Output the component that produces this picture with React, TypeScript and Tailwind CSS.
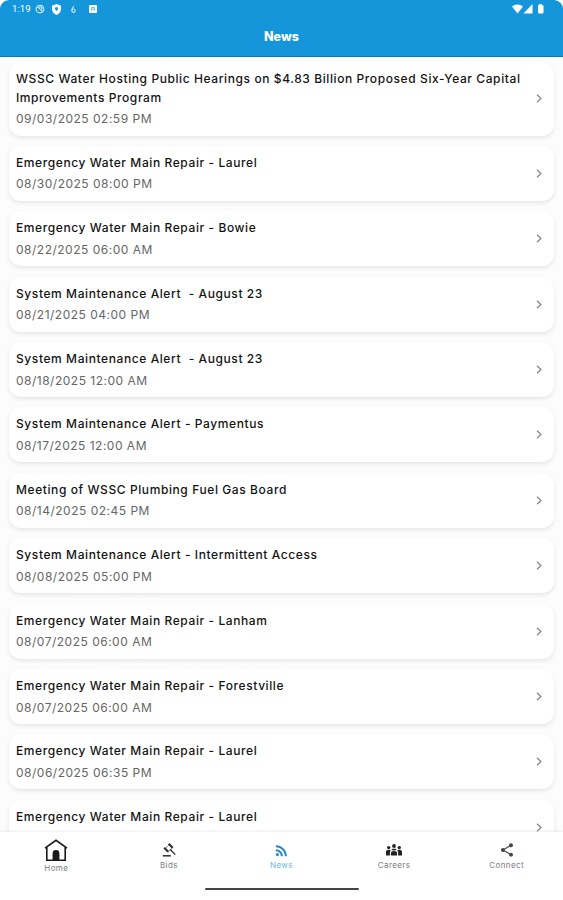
import React from 'react';
import { MdRssFeed, MdShare } from 'react-icons/md';

const items: [string, string?][] = [
  ['Emergency Water Main Repair - Laurel', '08/30/2025 08:00 PM'],
  ['Emergency Water Main Repair - Bowie', '08/22/2025 06:00 AM'],
  ['System Maintenance Alert  - August 23', '08/21/2025 04:00 PM'],
  ['System Maintenance Alert  - August 23', '08/18/2025 12:00 AM'],
  ['System Maintenance Alert - Paymentus', '08/17/2025 12:00 AM'],
  ['Meeting of WSSC Plumbing Fuel Gas Board', '08/14/2025 02:45 PM'],
  ['System Maintenance Alert - Intermittent Access', '08/08/2025 05:00 PM'],
  ['Emergency Water Main Repair - Lanham', '08/07/2025 06:00 AM'],
  ['Emergency Water Main Repair - Forestville', '08/07/2025 06:00 AM'],
  ['Emergency Water Main Repair - Laurel', '08/06/2025 06:35 PM'],
  ['Emergency Water Main Repair - Laurel'],
];

function Card({ title, date }: { title: string; date?: string }) {
  return (
    <li className="flex min-h-[55px] shrink-0 items-center rounded-[12px] bg-white pt-[7px] pb-[7px] pl-[7px] pr-[12px] shadow-[0_2px_4px_rgba(0,0,0,0.09)]">
      <div className="min-w-0 flex-1 self-start">
        <h2 className="whitespace-pre-wrap text-[12px] font-medium leading-[19px] tracking-[0.59px] text-[#141414]">{title}</h2>
        {date && <p className="mt-[2.5px] mb-[0.5px] text-[12px] leading-[19px] tracking-[0.5px] text-[#666666]">{date}</p>}
      </div>
      <svg className="h-[9px] w-[6px]" viewBox="0 0 6 9" fill="none" stroke="#8a8a8a" strokeWidth="1.3">
        <path d="M1 .7l3.900 3.800L1 8.300" />
      </svg>
    </li>
  );
}

function HomeIcon() {
  return (
    <svg className="h-[23px] w-[24px]" viewBox="0 0 24 23" fill="none" stroke="#181818" strokeWidth="1.6">
      <path d="M1 9.2L12 1.3l11 7.9M2.8 8.5v12.7h18.4V8.5" />
      <path d="M8.6 21v-6.500a3.400 3.400 0 0 1 6.800 0V21z" fill="#181818" stroke="none" />
    </svg>
  );
}

function GavelIcon() {
  return (
    <svg className="h-[14px] w-[14px]" viewBox="0 0 14 14" fill="none" stroke="#2c2c2c">
      <path d="M3.200 5.600L7.500 1.400l3.200 3.200-4.200 4.200z" fill="#fff" strokeWidth=".6" />
      <path d="M2.200 4.700l4 4M6.700.8l3.900 3.900" strokeWidth="2" />
      <path d="M8 6.300l5.300 5.300" strokeWidth="1.300" />
      <path d="M.8 12.800h8" strokeWidth="1.500" />
    </svg>
  );
}

function CareersIcon() {
  return (
    <svg className="h-[12px] w-[16px]" viewBox="0 0 16 12" fill="#222222">
      <circle cx="2.700" cy="3.600" r="1.700" />
      <circle cx="8" cy="2" r="1.900" />
      <circle cx="13.300" cy="3.600" r="1.700" />
      <path d="M0 8c0-1.500 1.200-2.200 2.700-2.200 1 0 1.700.3 2.100.7L3.900 8v3.500H0zM16 8c0-1.500-1.200-2.200-2.700-2.200-1 0-1.700.3-2.100.7L12.100 8v3.500H16z" />
      <path d="M4.900 11.500V9.200C4.900 7.700 6.200 7 8 7s3.100.7 3.100 2.200v2.300zM5.300 6l1.200-1.300h3L10.700 6 8 6.400z" />
    </svg>
  );
}

function Tab({ label, active, tall, children }: { label: string; active?: boolean; tall?: boolean; children: React.ReactNode }) {
  return (
    <div className={'flex flex-1 flex-col items-center ' + (active ? 'text-[#2387d0]' : 'text-[#444444]')}>
      <div className={'flex items-center justify-center ' + (tall ? 'h-[37px]' : 'h-[36px]')}>{children}</div>
      <span className={'text-[8px] leading-[10px] tracking-[0.4px] ' + (active ? 'text-[#6fb5e3]' : 'text-[#7d7d7d]') + (tall ? ' -mt-[6px]' : ' -mt-[8px]')}>{label}</span>
    </div>
  );
}

export default function App() {
  return (
    <div className="flex h-[900px] w-[563px] flex-col overflow-hidden bg-white font-['Inter','Liberation_Sans',sans-serif]">
      <header className="flex h-[57px] shrink-0 flex-col rounded-t-[9px] border-b border-[#0878bb] bg-[#1696da] text-white">
        <div className="flex h-[18px] items-center pl-3 pr-[18px]">
          <span className="w-[19px] font-['Roboto',sans-serif] text-[9.5px] leading-none tracking-[0.1px]">1:19</span>
          <svg className="ml-[4px] h-[10px] w-[10px]" viewBox="0 0 10 10" fill="none" stroke="#d8effb" strokeWidth="1.1">
            <circle cx="5" cy="5" r="3.800" /><path d="M2.200 2.300l5.700 5.500M4 3h2.800v2.400" />
          </svg>
          <svg className="ml-[7px] h-[11px] w-[9px]" viewBox="0 0 9 11">
            <path d="M4.500 0L9 1.700v3.400C9 8 7 10 4.500 11 2 10 0 8 0 5.100V1.700z" fill="white" />
            <path d="M4.500 3a1.600 1.600 0 0 1 1.600 1.600c0 1-1.600 2.600-1.600 2.600S2.900 5.600 2.900 4.600A1.600 1.600 0 0 1 4.500 3z" fill="#1696da" />
          </svg>
          <svg className="ml-[10px] h-[9px] w-[5px]" viewBox="0 0 6 9" fill="none" stroke="#c8e7f8" strokeWidth="1.300">
            <path d="M3.600.5C1.700 2.200 1 3.700 1 5.700" /><circle cx="3" cy="5.900" r="2" />
          </svg>
          <svg className="ml-[13px] h-[8px] w-[8px]" viewBox="0 0 8 8">
            <rect width="8" height="8" rx="1" fill="white" /><path d="M2.500 5.700V2.500h3v3.200M2.500 4.200h3" fill="none" stroke="#6abce9" />
          </svg>
          <div className="flex-1" />
          <svg className="h-[10px] w-[33px]" viewBox="0 0 33 10" fill="white">
            <path d="M0 2.500C3-.3 8-.3 11 2.500L5.500 9.500zM20.500 0v9.500h-9zM26 2q0-1 1-1V0h3v1q1.500 0 1.500 1v6.500q0 1-1 1H27q-1 0-1-1z" />
          </svg>
        </div>
        <h1 className="mt-[10px] text-center text-[12.5px] font-extrabold leading-[18px]">News</h1>
      </header>
      <main className="min-h-0 flex-1 overflow-hidden bg-[#fcfcfc] px-[9px] pt-[4.500px]">
        <ul className="flex flex-col gap-[10.4px]">
          <Card title="WSSC Water Hosting Public Hearings on $4.83 Billion Proposed Six-Year Capital Improvements Program" date="09/03/2025 02:59 PM" />
          {items.map(([title, date], i) => <Card key={i} title={title} date={date} />)}
        </ul>
      </main>
      <nav className="relative flex h-[68px] shrink-0 flex-col items-center bg-white shadow-[0_-1px_3px_rgba(0,0,0,0.07)]">
        <div className="flex h-[56px] w-full">
          <Tab label="Home" tall><HomeIcon /></Tab>
          <Tab label="Bids"><GavelIcon /></Tab>
          <Tab label="News" active><MdRssFeed size={17} /></Tab>
          <Tab label="Careers"><CareersIcon /></Tab>
          <Tab label="Connect"><MdShare size={16} /></Tab>
        </div>
        <div className="h-[2px] w-[154px] rounded-full bg-[#444444]" />
      </nav>
    </div>
  );
}
